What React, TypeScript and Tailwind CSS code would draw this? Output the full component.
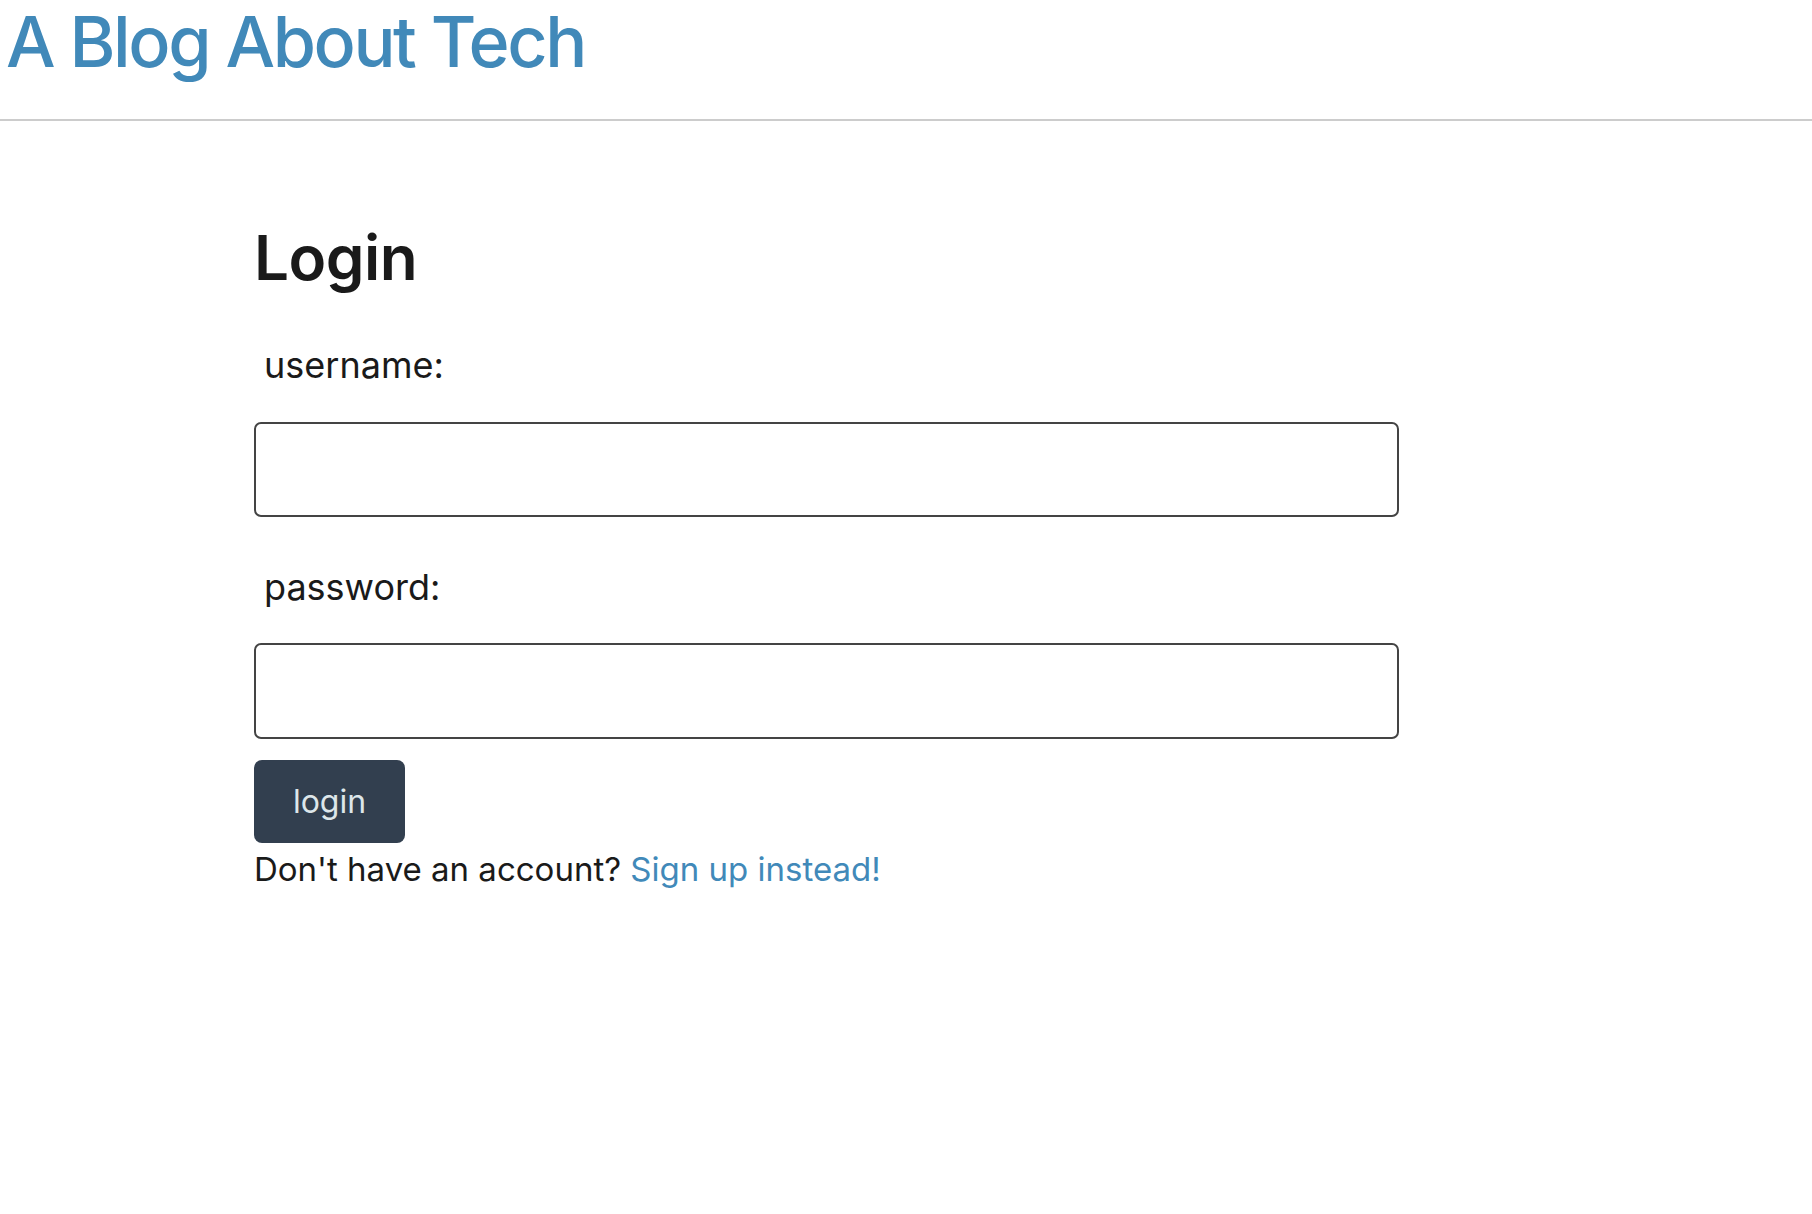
import { useState } from "react";

// Login page: site header + simple form

export default function App() {
  const [username, setUsername] = useState("");
  const [password, setPassword] = useState("");

  return (
    <div className="min-h-screen bg-white text-[#1a1a1a]" style={{ fontFamily: "Inter, 'Noto Sans', sans-serif" }}>
      {/* Header */}
      <header className="h-[121px] border-b-2 border-[#cccccc] pl-[6px]">
        <h1 className="text-[70px] leading-none pt-[7px] font-medium tracking-[-2.4px] text-[#4189b9]">
          A Blog About Tech
        </h1>
      </header>

      {/* Form */}
      <main className="pl-[254px] pt-[106px]">
        <form className="w-[1145px] flex flex-col" onSubmit={(e) => e.preventDefault()}>
          <h2 className="text-[62px] font-semibold leading-none tracking-[-0.5px] text-[#1a1a1a]">Login</h2>

          <label className="mt-[58px] pl-[10px] text-[36px] leading-none">username:</label>
          <input
            type="text"
            value={username}
            onChange={(e) => setUsername(e.target.value)}
            className="mt-[39px] h-[95px] w-full rounded-[7px] border-2 border-[#444444] px-3 text-[32px] outline-none"
          />

          <label className="mt-[52px] pl-[10px] text-[36px] leading-none">password:</label>
          <input
            type="password"
            value={password}
            onChange={(e) => setPassword(e.target.value)}
            className="mt-[38px] h-[96px] w-full rounded-[7px] border-2 border-[#444444] px-3 text-[32px] outline-none"
          />

          <button
            type="submit"
            className="mt-[21px] h-[83px] w-[151px] rounded-[8px] bg-[#323f4f] text-[32px] text-[#dde6ea]"
          >
            login
          </button>

          <p className="mt-[10px] text-[33px] leading-none">
            Don't have an account? <a href="#" className="text-[#4189b9]">Sign up instead!</a>
          </p>
        </form>
      </main>
    </div>
  );
}
